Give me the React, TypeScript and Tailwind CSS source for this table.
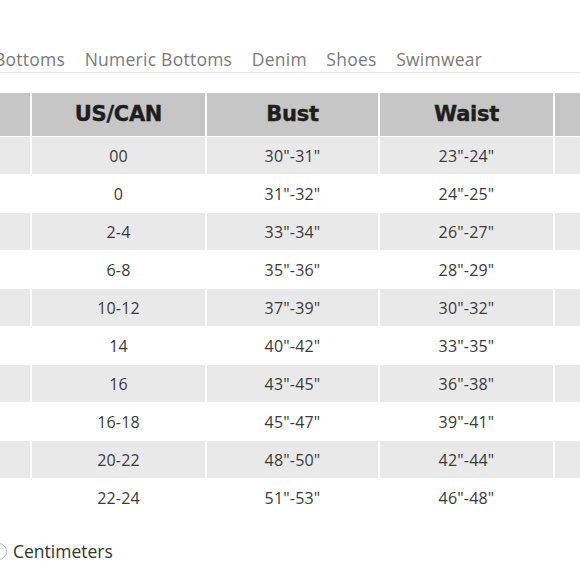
import React from "react";

const tabs = ["Bottoms", "Numeric Bottoms", "Denim", "Shoes", "Swimwear"];

const rows = [
  ["XXS", "00", "30\"-31\"", "23\"-24\"", "33\"-34\""],
  ["XS", "0", "31\"-32\"", "24\"-25\"", "34\"-35\""],
  ["S", "2-4", "33\"-34\"", "26\"-27\"", "36\"-37\""],
  ["M", "6-8", "35\"-36\"", "28\"-29\"", "38\"-39\""],
  ["L", "10-12", "37\"-39\"", "30\"-32\"", "40\"-42\""],
  ["XL", "14", "40\"-42\"", "33\"-35\"", "43\"-45\""],
  ["1X", "16", "43\"-45\"", "36\"-38\"", "46\"-48\""],
  ["2X", "16-18", "45\"-47\"", "39\"-41\"", "49\"-51\""],
  ["3X", "20-22", "48\"-50\"", "42\"-44\"", "52\"-54\""],
  ["4X", "22-24", "51\"-53\"", "46\"-48\"", "55\"-57\""],
];

const headers = ["Size", "US/CAN", "Bust", "Waist", "Hips"];
const widths = ["w-[173px]", "w-[173px]", "w-[171px]", "w-[173px]", "w-[173px]"];

const App: React.FC = () => {
  return (
    <div
      className="relative w-[580px] h-[580px] overflow-hidden bg-white"
      style={{ fontFamily: "'Open Sans', sans-serif" }}
    >
      {/* tabs */}
      <div className="pt-[47px] border-b border-[#e4e4e4] h-[73px]">
        <div className="flex gap-[19.5px] ml-[-6px] text-[17.5px] text-[#7a7a7a] leading-[24px] whitespace-nowrap tracking-[0.25px]">
          {tabs.map((t) => (
            <span key={t}>{t}</span>
          ))}
        </div>
      </div>

      {/* table */}
      <div className="mt-[20px] ml-[-143px] flex flex-col gap-[1px] w-[900px]">
        <div className="flex gap-[2px] h-[43px] bg-white">
          {headers.map((h, j) => (
            <div
              key={h}
              className={`${widths[j]} shrink-0 bg-[#c6c6c6] flex items-center justify-center text-[21px] font-bold text-[#1e1e1e] tracking-[-0.3px]`}
              style={{ fontFamily: "'DejaVu Sans', Verdana, sans-serif", WebkitTextStroke: "0.4px #1e1e1e" }}
            >
              {h}
            </div>
          ))}
        </div>
        {rows.map((r, i) => (
          <div key={i} className="flex gap-[2px] h-[37px]">
            {r.map((c, j) => (
              <div
                key={j}
                className={`${widths[j]} shrink-0 flex items-center justify-center text-[16px] text-[#3a3a3a] tracking-[0.2px] ${
                  i % 2 === 0 ? "bg-[#e9e9e9]" : "bg-white"
                }`}
              >
                {c}
              </div>
            ))}
          </div>
        ))}
      </div>

      {/* units */}
      <div className="mt-[22px] flex items-center ml-[-10px] gap-[6px]">
        <span className="w-[17px] h-[17px] rounded-full border border-[#bbb] bg-white" />
        <span className="text-[17.5px] text-[#333]">Centimeters</span>
      </div>
    </div>
  );
};

export default App;
